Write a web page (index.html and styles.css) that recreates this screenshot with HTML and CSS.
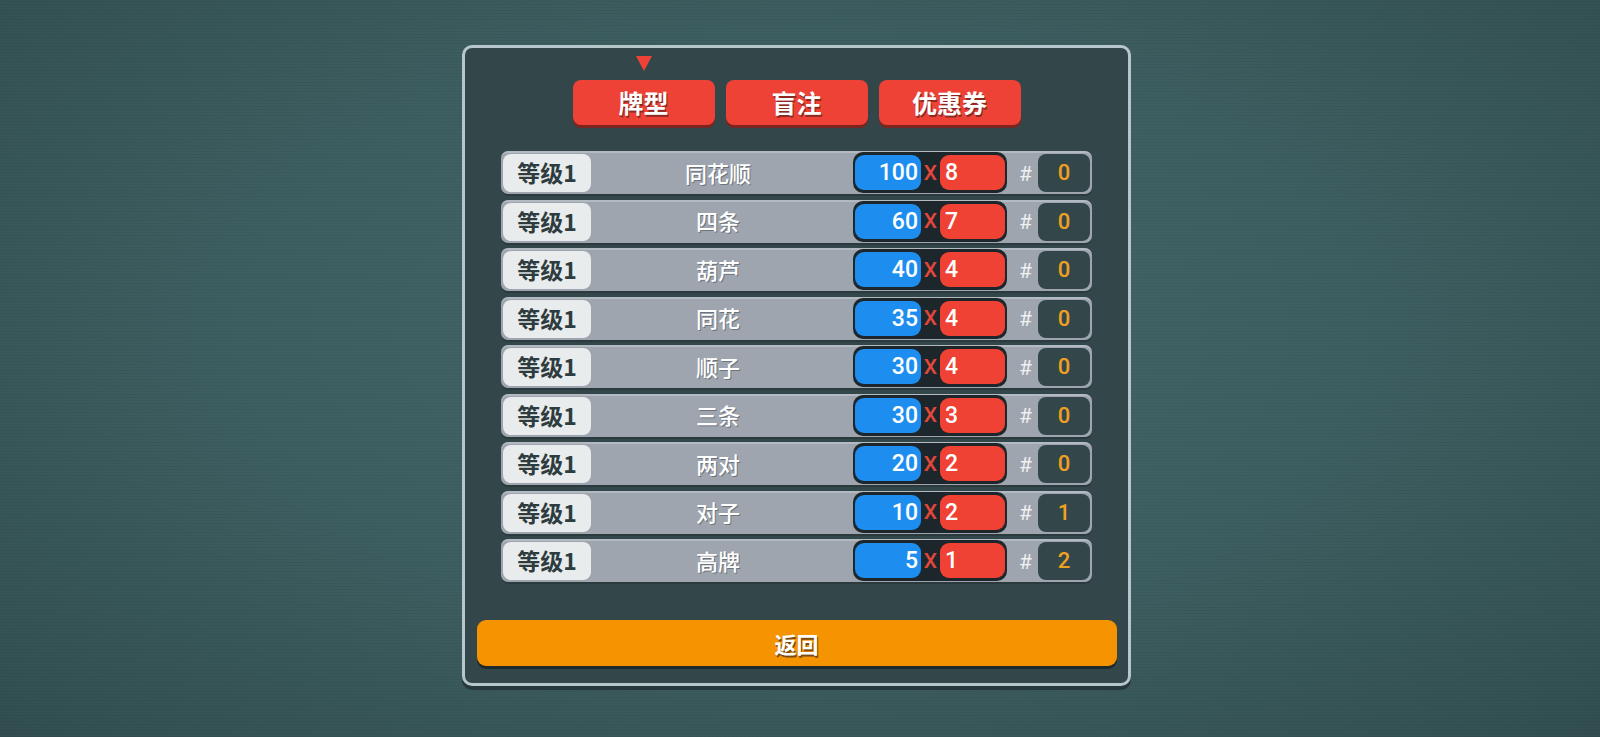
FILE: index.html
```html
<!DOCTYPE html>
<html lang="zh">
<head>
<meta charset="utf-8">
<title>牌型</title>
<link rel="stylesheet" href="styles.css">
</head>
<body>
<div class="stage">
  <div class="panel">
    <div class="tabs">
      <div class="tab active">牌型<span class="marker"></span></div>
      <div class="tab">盲注</div>
      <div class="tab">优惠券</div>
    </div>
    <div class="rows">
      <div class="row"><span class="level">等级1</span><span class="name">同花顺</span><span class="score"><span class="chips">100</span><span class="x">X</span><span class="mult">8</span></span><span class="hash">#</span><span class="count">0</span></div>
      <div class="row"><span class="level">等级1</span><span class="name">四条</span><span class="score"><span class="chips">60</span><span class="x">X</span><span class="mult">7</span></span><span class="hash">#</span><span class="count">0</span></div>
      <div class="row"><span class="level">等级1</span><span class="name">葫芦</span><span class="score"><span class="chips">40</span><span class="x">X</span><span class="mult">4</span></span><span class="hash">#</span><span class="count">0</span></div>
      <div class="row"><span class="level">等级1</span><span class="name">同花</span><span class="score"><span class="chips">35</span><span class="x">X</span><span class="mult">4</span></span><span class="hash">#</span><span class="count">0</span></div>
      <div class="row"><span class="level">等级1</span><span class="name">顺子</span><span class="score"><span class="chips">30</span><span class="x">X</span><span class="mult">4</span></span><span class="hash">#</span><span class="count">0</span></div>
      <div class="row"><span class="level">等级1</span><span class="name">三条</span><span class="score"><span class="chips">30</span><span class="x">X</span><span class="mult">3</span></span><span class="hash">#</span><span class="count">0</span></div>
      <div class="row"><span class="level">等级1</span><span class="name">两对</span><span class="score"><span class="chips">20</span><span class="x">X</span><span class="mult">2</span></span><span class="hash">#</span><span class="count">0</span></div>
      <div class="row"><span class="level">等级1</span><span class="name">对子</span><span class="score"><span class="chips">10</span><span class="x">X</span><span class="mult">2</span></span><span class="hash">#</span><span class="count">1</span></div>
      <div class="row"><span class="level">等级1</span><span class="name">高牌</span><span class="score"><span class="chips">5</span><span class="x">X</span><span class="mult">1</span></span><span class="hash">#</span><span class="count">2</span></div>
    </div>
    <div class="back">返回</div>
  </div>
</div>
</body>
</html>
```
FILE: styles.css
```css
html, body {
  margin: 0;
  padding: 0;
  width: 1600px;
  height: 737px;
  overflow: hidden;
}
body {
  background:
    repeating-linear-gradient(0deg, rgba(0,0,0,0.05) 0 1px, rgba(255,255,255,0) 1px 3px),
    radial-gradient(ellipse at 50% 45%, #436668 0%, #3e5f61 50%, #324e50 100%);
  font-family: "Noto Sans CJK SC", "Noto Sans", sans-serif;
}
.stage {
  padding: 45px 0 0 462px;
}
.panel {
  position: relative;
  box-sizing: border-box;
  width: 669px;
  height: 641px;
  border: 3px solid #b7c6ca;
  border-radius: 10px;
  background: #33474b;
  box-shadow: 0 4px 0 #26383b;
  display: flex;
  flex-direction: column;
  align-items: center;
  padding-top: 32px;
}
.tabs {
  display: flex;
  gap: 11px;
}
.tab {
  position: relative;
  width: 142px;
  height: 45px;
  background: #ee4236;
  border-radius: 8px;
  box-shadow: 0 3px 0 #7a2520;
  color: #fff;
  font-weight: 700;
  font-size: 25px;
  line-height: 45px;
  text-align: center;
  text-shadow: 1px 2px 0 #8c2a22;
}
.marker {
  position: absolute;
  left: 63px;
  top: -24px;
  width: 0;
  height: 0;
  border-left: 8px solid transparent;
  border-right: 8px solid transparent;
  border-top: 15px solid #ee4236;
}
.rows {
  margin-top: 26px;
  width: 591px;
  display: flex;
  flex-direction: column;
  gap: 5.5px;
}
.row {
  box-sizing: border-box;
  height: 43px;
  border-radius: 7px;
  background: #9ea5ae;
  border-top: 2px solid #b4bac2;
  box-shadow: 0 2px 0 #2a3a3d;
  display: flex;
  align-items: center;
  padding: 0 2px;
}
.level {
  box-sizing: border-box;
  width: 88px;
  height: 38px;
  margin-top: -1px;
  background: #e9ecec;
  border-radius: 8px;
  color: #2e3c3f;
  font-weight: 700;
  font-size: 23px;
  line-height: 36px;
  text-align: center;
}
.name {
  flex: 1;
  text-align: center;
  color: #fff;
  font-size: 22px;
  font-weight: 500;
  line-height: 1;
  text-shadow: 1px 1px 0 #6d737b;
  padding-right: 8px;
  margin-top: -4px;
}
.score {
  display: flex;
  align-items: center;
  box-sizing: border-box;
  width: 154px;
  height: 41px;
  margin-top: -2px;
  padding: 2px;
  background: #1d262a;
  border-radius: 10px;
}
.chips {
  box-sizing: border-box;
  width: 66px;
  height: 35px;
  background: #1d8ef0;
  border-radius: 9px;
  color: #fff;
  font-family: "Roboto", "Noto Sans", sans-serif;
  font-weight: 500;
  font-size: 23px;
  line-height: 35px;
  text-align: right;
  padding-right: 3px;
}
.x {
  width: 19px;
  text-align: center;
  color: #e2473b;
  font-family: "Roboto", sans-serif;
  font-weight: 500;
  font-size: 21px;
}
.mult {
  box-sizing: border-box;
  width: 65px;
  height: 35px;
  background: #ef4134;
  border-radius: 9px;
  color: #fff;
  font-family: "Roboto", "Noto Sans", sans-serif;
  font-weight: 500;
  font-size: 23px;
  line-height: 35px;
  text-align: left;
  padding-left: 5px;
}
.hash {
  width: 31px;
  text-align: center;
  color: #eef0f2;
  font-family: "Roboto", sans-serif;
  font-size: 21px;
  padding-left: 6px;
  box-sizing: border-box;
}
.count {
  width: 52px;
  height: 38px;
  margin-top: -1px;
  background: #33474b;
  border-radius: 8px;
  color: #f0a020;
  font-family: "Roboto", sans-serif;
  font-weight: 500;
  font-size: 22px;
  line-height: 38px;
  text-align: center;
}
.back {
  margin-top: 38px;
  width: 640px;
  height: 46px;
  background: #f59300;
  border-radius: 9px;
  box-shadow: 0 3px 0 #1f2a2c;
  color: #fff;
  font-weight: 700;
  font-size: 22px;
  line-height: 46px;
  text-align: center;
  text-shadow: 1px 2px 0 #7a4a10;
}
```
